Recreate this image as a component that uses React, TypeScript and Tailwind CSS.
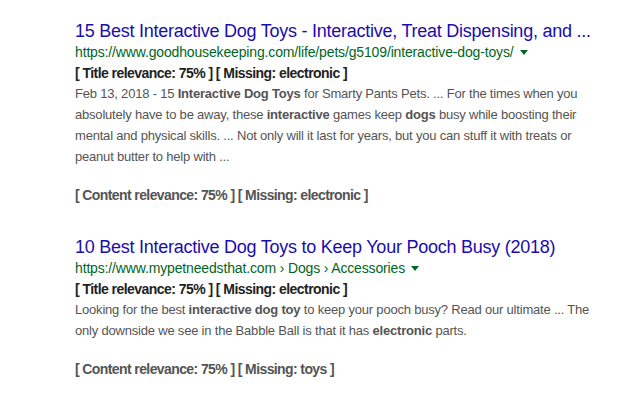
const font = { fontFamily: '"Liberation Sans", Arial, sans-serif' };

type Part = { t: string; b?: boolean };

const results: {
  title: string;
  url: string;
  missingTitle: string;
  snippet: Part[];
  missingContent: string;
}[] = [
  {
    title: "15 Best Interactive Dog Toys - Interactive, Treat Dispensing, and ...",
    url: "https://www.goodhousekeeping.com/life/pets/g5109/interactive-dog-toys/",
    missingTitle: "electronic",
    snippet: [
      { t: "Feb 13, 2018 - 15 " },
      { t: "Interactive Dog Toys", b: true },
      { t: " for Smarty Pants Pets. ... For the times when you absolutely have to be away, these " },
      { t: "interactive", b: true },
      { t: " games keep " },
      { t: "dogs", b: true },
      {
        t: " busy while boosting their mental and physical skills. ... Not only will it last for years, but you can stuff it with treats or peanut butter to help with ...",
      },
    ],
    missingContent: "electronic",
  },
  {
    title: "10 Best Interactive Dog Toys to Keep Your Pooch Busy (2018)",
    url: "https://www.mypetneedsthat.com › Dogs › Accessories",
    missingTitle: "electronic",
    snippet: [
      { t: "Looking for the best " },
      { t: "interactive dog toy", b: true },
      { t: " to keep your pooch busy? Read our ultimate ... The only downside we see in the Babble Ball is that it has " },
      { t: "electronic", b: true },
      { t: " parts." },
    ],
    missingContent: "toys",
  },
];

export default function App() {
  return (
    <div className="h-[400px] w-[640px] overflow-hidden bg-white pl-[75px] pr-[40px] pt-[20px]" style={font}>
      {results.map((r, i) => (
        <div key={i} className="mb-[30px]">
          <div className="text-[18px] leading-[22px] text-[#1a0dab] tracking-[-0.25px]">{r.title}</div>
          <div className="flex items-center text-[14px] leading-[21px] text-[#006621] tracking-[-0.15px]">
            <span>{r.url}</span>
            <span className="ml-[6px] inline-block h-0 w-0 border-x-[4px] border-t-[5px] border-x-transparent border-t-[#006621]" />
          </div>
          <div className="text-[14px] font-bold leading-[20px] text-[#222] tracking-[-0.55px]">
            [ Title relevance: 75% ] [ Missing: {r.missingTitle} ]
          </div>
          <div className="text-[13px] leading-[21px] text-[#545454] tracking-[-0.2px]">
            {r.snippet.map((p, j) =>
              p.b ? (
                <b key={j} className="font-bold text-[#545454]">
                  {p.t}
                </b>
              ) : (
                <span key={j}>{p.t}</span>
              )
            )}
          </div>
          <div className="mt-[18px] text-[14px] font-bold leading-[21px] text-[#545454] tracking-[-0.6px]">
            [ Content relevance: 75% ] [ Missing: {r.missingContent} ]
          </div>
        </div>
      ))}
    </div>
  );
}
